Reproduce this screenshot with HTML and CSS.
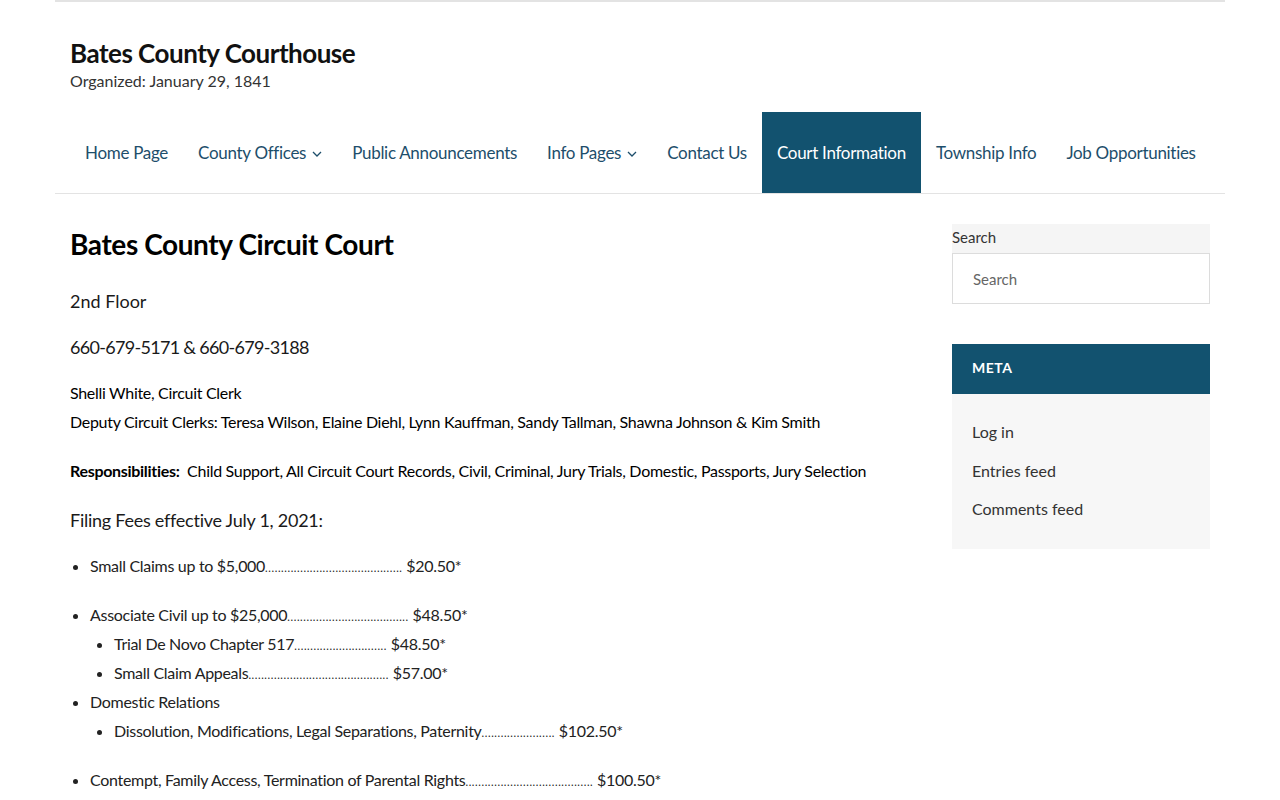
FILE: index.html
```html
<!DOCTYPE html>
<html lang="en">
<head>
<meta charset="utf-8">
<title>Bates County Circuit Court</title>
<link rel="stylesheet" href="styles.css">
</head>
<body>
<div class="page">
  <header class="site-header">
    <div class="branding">
      <div class="site-title">Bates County Courthouse</div>
      <div class="site-desc">Organized: January 29, 1841</div>
    </div>
    <nav class="main-nav">
      <ul class="menu">
        <li><a href="#">Home Page</a></li>
        <li><a href="#">County Offices <svg class="chev" viewBox="0 0 10 6" width="10" height="6"><path d="M1 1l4 4 4-4" fill="none" stroke="currentColor" stroke-width="1.3"/></svg></a></li>
        <li><a href="#">Public Announcements</a></li>
        <li><a href="#">Info Pages <svg class="chev" viewBox="0 0 10 6" width="10" height="6"><path d="M1 1l4 4 4-4" fill="none" stroke="currentColor" stroke-width="1.3"/></svg></a></li>
        <li><a href="#">Contact Us</a></li>
        <li class="current"><a href="#">Court Information</a></li>
        <li><a href="#">Township Info</a></li>
        <li><a href="#">Job Opportunities</a></li>
      </ul>
    </nav>
  </header>
  <div class="content-wrap">
    <main class="main">
      <h1 class="entry-title">Bates County Circuit Court</h1>
      <p class="lead">2nd Floor</p>
      <p class="lead phone">660-679-5171 &amp; 660-679-3188</p>
      <p class="tight">Shelli White, Circuit Clerk</p>
      <p class="tight">Deputy Circuit Clerks: Teresa Wilson, Elaine Diehl, Lynn Kauffman, Sandy Tallman, Shawna Johnson &amp; Kim Smith</p>
      <p class="resp"><strong>Responsibilities:</strong>&nbsp; Child Support, All Circuit Court Records, Civil, Criminal, Jury Trials, Domestic, Passports, Jury Selection</p>
      <p class="lead fees">Filing Fees effective July 1, 2021:</p>
      <ul class="fee-list">
        <li>Small Claims up to $5,000<span class="dots">...........................................</span> $20.50*</li>
        <li>Associate Civil up to $25,000<span class="dots">......................................</span> $48.50*
          <ul>
            <li>Trial De Novo Chapter 517<span class="dots">.............................</span> $48.50*</li>
            <li>Small Claim Appeals<span class="dots">............................................</span> $57.00*</li>
          </ul>
        </li>
        <li>Domestic Relations
          <ul>
            <li>Dissolution, Modifications, Legal Separations, Paternity<span class="dots">.......................</span> $102.50*</li>
          </ul>
        </li>
        <li>Contempt, Family Access, Termination of Parental Rights<span class="dots">........................................</span> $100.50*</li>
      </ul>
    </main>
    <aside class="sidebar">
      <section class="widget search-widget">
        <label class="search-label">Search</label>
        <div class="search-input">Search</div>
      </section>
      <section class="widget meta-widget">
        <h2 class="widget-title">META</h2>
        <ul class="meta-list">
          <li><a href="#">Log in</a></li>
          <li><a href="#">Entries feed</a></li>
          <li><a href="#">Comments feed</a></li>
        </ul>
      </section>
    </aside>
  </div>
</div>
</body>
</html>
```
FILE: styles.css
```css
* { box-sizing: border-box; }
html, body { margin: 0; padding: 0; background: #fff; }
body {
  font-family: Lato, "Open Sans", sans-serif;
  color: #000;
  font-size: 16px;
}
a { text-decoration: none; color: inherit; }
.page {
  width: 1170px;
  margin: 0 auto;
  border-top: 2px solid #e3e3e3;
}
.site-header {
  border-bottom: 1px solid #e3e3e3;
}
.branding {
  padding: 36px 15px 0;
  height: 110px;
}
.site-title {
  font-size: 26px;
  font-weight: 700;
  line-height: 30px;
  color: #111;
  letter-spacing: -0.5px;
}
.site-desc {
  font-size: 16px;
  color: #333;
  line-height: 20px;
  margin-top: 3px;
}
.main-nav { padding: 0 15px; }
.menu {
  list-style: none;
  margin: 0;
  padding: 0;
  display: flex;
  white-space: nowrap;
}
.menu li { flex: none; }
.menu li a {
  display: flex;
  align-items: center;
  height: 81px;
  padding: 0 15px;
  font-size: 17px;
  color: #1d4e6b;
  letter-spacing: -0.3px;
}
.menu li.current a {
  background: #12526f;
  color: #fff;
}
.chev { margin-left: 6px; margin-top: 2px; }
.content-wrap {
  display: flex;
  padding: 30px 15px 0;
}
.main {
  width: 847px;
  flex: none;
}
.entry-title {
  font-size: 28px;
  font-weight: 700;
  margin: 0;
  line-height: 40px;
  color: #000;
  letter-spacing: -0.4px;
}
.main p { margin: 0; }
.lead {
  font-size: 18px;
  font-weight: 400;
  line-height: 26px;
  margin-top: 24px !important;
  color: #1a1a1a;
}
.lead + .lead { margin-top: 20px !important; }
.phone { letter-spacing: -0.7px; }
.tight {
  font-size: 16px;
  line-height: 29px;
  letter-spacing: -0.3px;
}
.lead + .tight { margin-top: 18px !important; }
.resp {
  font-size: 16px;
  line-height: 29px;
  margin-top: 20px !important;
  letter-spacing: -0.3px;
}
.fees { margin-top: 22px !important; letter-spacing: -0.25px; }
.fee-list {
  margin: 18px 0 0;
  padding-left: 20px;
  font-size: 16px;
  line-height: 29px;
  color: #222;
  letter-spacing: -0.3px;
}
.fee-list ul { padding-left: 24px; margin: 0; list-style: disc; }
.fee-list > li:first-child { margin-bottom: 20px; }
.fee-list > li:nth-child(3) { margin-bottom: 20px; }
.dots { font-size: 11px; letter-spacing: 0.6px; line-height: 1; }
.sidebar {
  width: 258px;
  margin-left: 35px;
  flex: none;
}
.search-widget {
  background: #f5f5f5;
}
.search-label {
  display: block;
  font-size: 15px;
  line-height: 27px;
  padding-bottom: 2px;
  color: #333;
}
.search-input {
  height: 51px;
  border: 1px solid #dcdcdc;
  background: #fff;
  padding: 0 20px;
  display: flex;
  align-items: center;
  color: #666;
  font-size: 15px;
}
.meta-widget {
  margin-top: 40px;
  background: #f7f7f7;
  padding-bottom: 20px;
}
.widget-title {
  margin: 0;
  background: #12526f;
  color: #fff;
  font-size: 14px;
  font-weight: 700;
  height: 50px;
  line-height: 48px;
  padding: 0 20px;
  letter-spacing: 0.5px;
}
.meta-list {
  list-style: none;
  margin: 0;
  padding: 19px 20px 0;
  font-size: 16px;
  color: #333;
}
.meta-list li { line-height: 38.5px; }
```
